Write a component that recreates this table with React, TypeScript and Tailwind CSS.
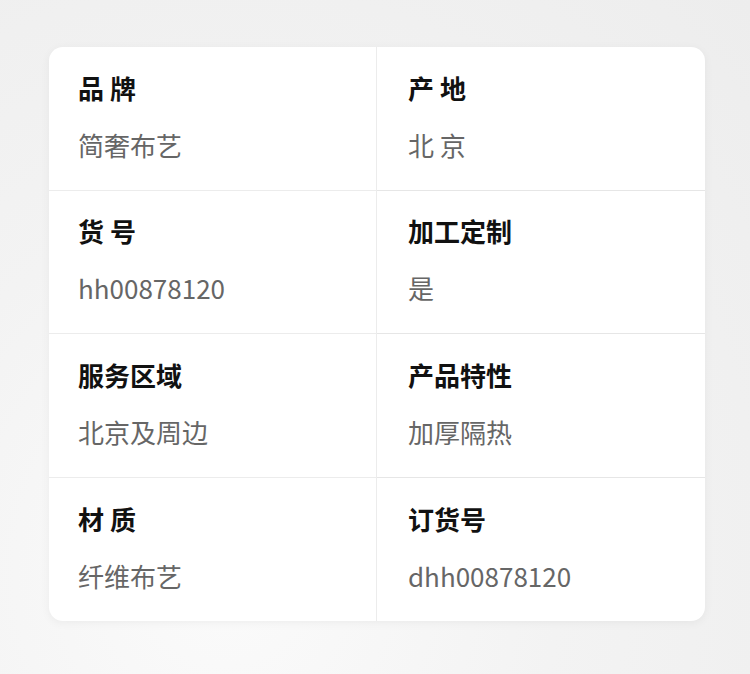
import React from 'react';

const specs = [
  { label: '品 牌', value: '简奢布艺' },
  { label: '产 地', value: '北 京' },
  { label: '货 号', value: 'hh00878120' },
  { label: '加工定制', value: '是' },
  { label: '服务区域', value: '北京及周边' },
  { label: '产品特性', value: '加厚隔热' },
  { label: '材 质', value: '纤维布艺' },
  { label: '订货号', value: 'dhh00878120' },
];

export default function App() {
  return (
    <div
      className="min-h-[674px] w-[750px] bg-[radial-gradient(ellipse_at_30%_85%,#fbfbfb_0%,#f3f3f3_45%,#ededed_100%)] pt-[47px] pl-[49px]"
      style={{ fontFamily: '"Noto Sans CJK SC", "Noto Sans", sans-serif' }}
    >
      <div className="grid w-[656px] grid-cols-2 overflow-hidden rounded-[14px] bg-white shadow-[0_2px_10px_rgba(0,0,0,0.05)]">
        {specs.map((item, i) => (
          <div
            key={item.label}
            className={`flex h-[143.5px] flex-col justify-center gap-[21px] pb-[4px] pl-[29px] ${
              i % 2 === 0 ? 'border-r border-[#ececec]' : 'pl-[31px]'
            } ${i < specs.length - 2 ? 'border-b border-[#e6e6e6]' : ''}`}
          >
            <div className="text-[26px] leading-[36px] font-bold text-[#111]">{item.label}</div>
            <div className="text-[26px] leading-[36px] text-[#666]">{item.value}</div>
          </div>
        ))}
      </div>
    </div>
  );
}
